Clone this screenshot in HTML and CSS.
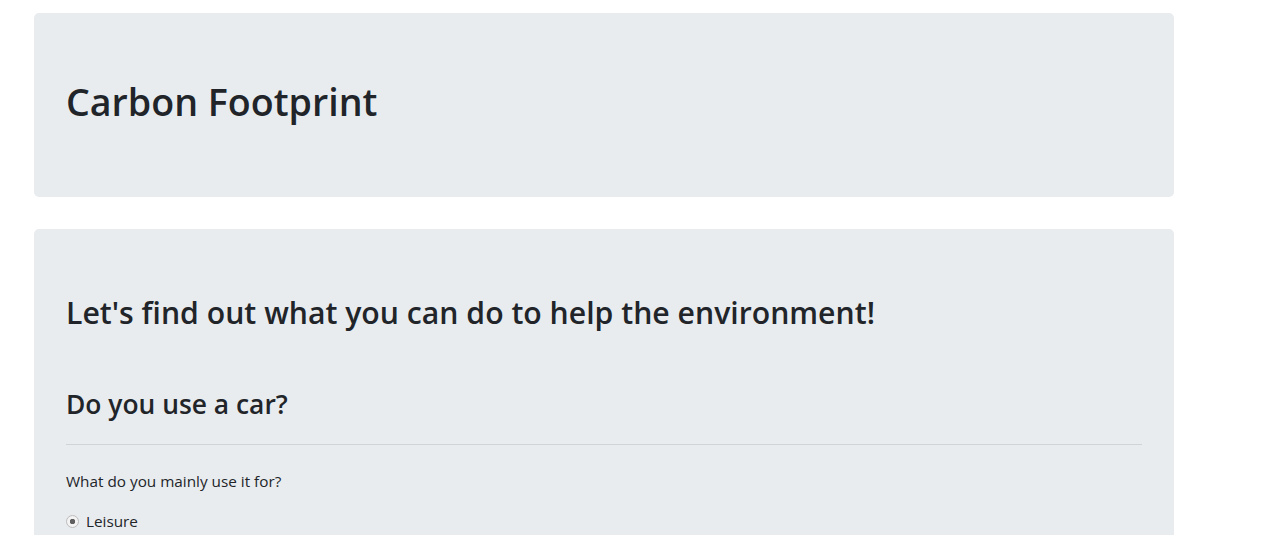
FILE: index.html
```html
<!DOCTYPE html>
<html lang="en">
<head>
<meta charset="utf-8">
<title>Carbon Footprint</title>
<link rel="stylesheet" href="styles.css">
</head>
<body>
<div class="container">
  <header class="jumbotron">
    <h1 class="title">Carbon Footprint</h1>
  </header>
  <main class="jumbotron">
    <h2 class="lead-title">Let's find out what you can do to help the environment!</h2>
    <section class="question">
      <h3 class="q-title">Do you use a car?</h3>
      <hr class="divider">
      <p class="q-label">What do you mainly use it for?</p>
      <label class="option"><input type="radio" name="use" class="radio" checked> <span>Leisure</span></label>
    </section>
  </main>
</div>
</body>
</html>
```

FILE: styles.css
```css
* { box-sizing: border-box; }
html, body { margin: 0; padding: 0; }
body {
  background: #fff;
  color: #212529;
  font-family: "Open Sans", "Noto Sans", sans-serif;
  font-size: 15.3px;
  overflow: hidden;
}
.container {
  width: 1140px;
  margin: 13px 0 0 34px;
}
.jumbotron {
  background: #e9ecef;
  border-radius: 5px;
  padding: 64px 32px;
  margin-bottom: 32px;
}
.title {
  margin: 0 0 6px;
  font-size: 37.6px;
  line-height: 50px;
  font-weight: 600;
}
.lead-title {
  margin: 0 0 6px;
  font-size: 30.2px;
  line-height: 40px;
  font-weight: 600;
}
.question { margin-top: 54px; }
.q-title {
  margin: 0;
  font-size: 26.4px;
  line-height: 34px;
  font-weight: 600;
}
.divider {
  border: 0;
  border-top: 1px solid rgba(0,0,0,0.1);
  margin: 23px 0 24px;
}
.q-label { margin: 0 0 16px; line-height: 24px; }
.option { display: flex; align-items: center; gap: 7px; line-height: 24px; }
.radio {
  appearance: none;
  -webkit-appearance: none;
  margin: 0;
  width: 13px;
  height: 13px;
  border-radius: 50%;
  border: 1px solid #bcbcbc;
  background: radial-gradient(circle, #5f5f5f 0 2.5px, #f3f3f3 3px);
}
```
